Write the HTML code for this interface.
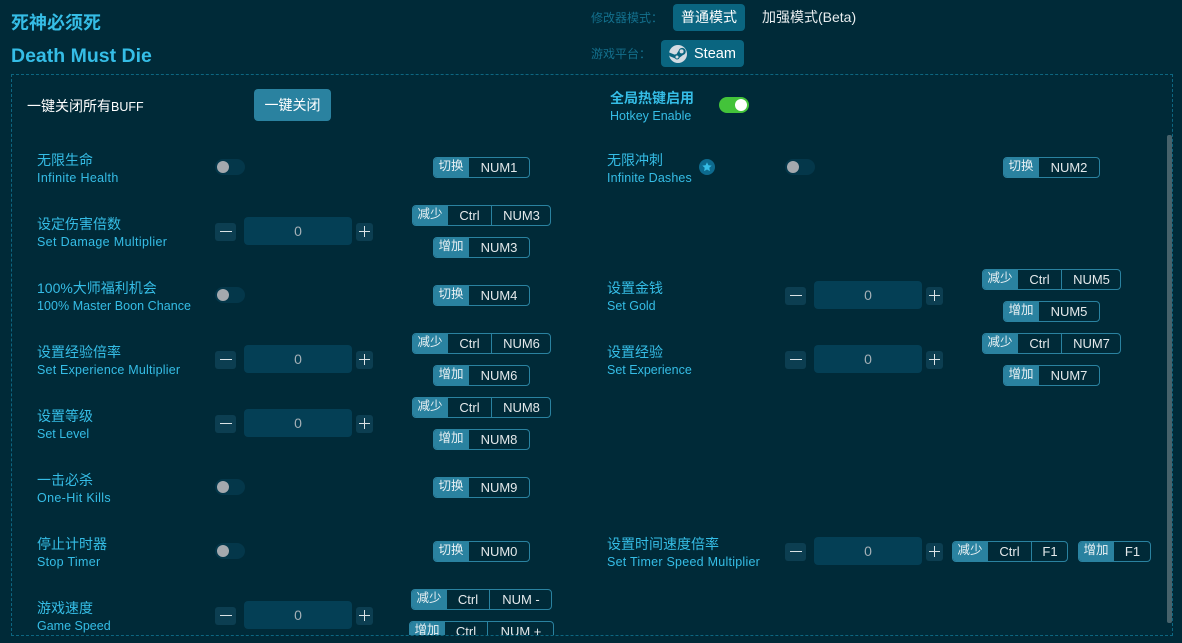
<!DOCTYPE html>
<html lang="zh"><head><meta charset="utf-8"><title>死神必须死</title>
<style>
*{box-sizing:border-box;margin:0;padding:0}
html,body{width:1182px;height:643px;overflow:hidden;background:#002a38}
body{position:relative;font-family:"Liberation Sans","Noto Sans CJK SC",sans-serif;color:#fff}
.a{position:absolute;white-space:nowrap}
#clip{position:absolute;left:0;top:75px;width:1182px;height:560px;overflow:hidden}
#clip>*{margin-top:-75px}
.cn{position:absolute;white-space:nowrap;font-size:14px;line-height:18px;color:#35bde6}
.en{position:absolute;white-space:nowrap;font-size:12.5px;line-height:16px;color:#35bde6}
.t{position:absolute;width:30px;height:16px;border-radius:8px;background:#04374a}
.t:after{content:"";position:absolute;left:2px;top:2px;width:12px;height:12px;border-radius:50%;background:#a4a9ae}
.s{position:absolute;width:21px;height:18px;border-radius:3px;background:#0c3e51}
.s.p{width:17px}
.s:before{content:"";position:absolute;left:5px;top:8px;width:12px;height:1px;background:#dbe3e6}
.s.p:before{left:3px;width:11px}
.s.p:after{content:"";position:absolute;left:8px;top:3px;width:1px;height:11px;background:#dbe3e6}
.v{position:absolute;width:108px;height:28px;border-radius:4px;background:#043f55;color:#a4b0b6;font-size:14px;line-height:28px;text-align:center}
.k{position:absolute;height:21px;display:flex;border:1px solid #2a82a0;border-radius:4px;overflow:hidden;font-size:13px;line-height:19px;color:#e4e9eb;background:#002a38}
.k b{font-weight:400;background:#2a82a0;text-align:center;flex:none;margin-left:-1px;font-size:12.5px;line-height:17px;color:#e8f0f3}
.k i{font-style:normal;text-align:center;flex:none;border-left:1px solid #2a82a0}
.k b+i{border-left:0}
</style></head><body>
<div class="a" style="left:11px;top:11px;font-size:18px;line-height:24px;font-weight:700;color:#35bde6">死神必须死</div>
<div class="a" style="left:11px;top:44px;font-size:19.5px;line-height:24px;font-weight:700;color:#35bde6">Death Must Die</div>
<div class="a" style="left:591px;top:10px;font-size:12px;line-height:16px;color:#13708d">修改器模式：</div>
<div class="a" style="left:673px;top:4px;width:72px;height:27px;border-radius:4px;background:#0a6580;font-size:14px;line-height:27px;text-align:center">普通模式</div>
<div class="a" style="left:762px;top:8px;font-size:14px;line-height:19px;color:#e8edef">加强模式(Beta)</div>
<div class="a" style="left:591px;top:46px;font-size:12px;line-height:16px;color:#13708d">游戏平台：</div>
<div class="a" style="left:661px;top:40px;width:83px;height:27px;border-radius:4px;background:#0a6580"></div>
<svg class="a" style="left:669px;top:45px" width="18" height="18" viewBox="0 0 18 18"><circle cx="9" cy="9" r="9" fill="#d3dbe2"/><path d="M0.3 11 L6 13.4 A2.6 2.6 0 0 0 10.6 12.6 L14 10 A3.6 3.6 0 1 0 9.6 5.8 L7.4 9.3 A2.7 2.7 0 0 0 5.6 9.6 L0 7.4 L0 9 Z" fill="#0a6580"/><circle cx="12.6" cy="6.4" r="2" fill="#d3dbe2"/><circle cx="8" cy="12" r="1.5" fill="#d3dbe2"/></svg>
<div class="a" style="left:694px;top:44px;font-size:14.5px;line-height:20px">Steam</div>

<div class="a" style="left:11px;top:74px;width:1162px;height:562px;border:1px dashed #0d6680"></div>

<div class="a" style="left:27px;top:97px;font-size:14px;line-height:18px">一键关闭所有<span style="font-size:12.5px">BUFF</span></div>
<div class="a" style="left:254px;top:89px;width:77px;height:32px;border-radius:4px;background:#2a82a0;font-size:14px;line-height:32px;text-align:center">一键关闭</div>
<div class="a" style="left:610px;top:89px;font-size:14px;line-height:18px;font-weight:700;color:#35bde6">全局热键启用</div>
<div class="en" style="left:610px;top:108px">Hotkey Enable</div>
<div class="a" style="left:719px;top:97px;width:30px;height:16px;border-radius:8px;background:#43c33a"></div>
<div class="a" style="left:735px;top:99px;width:12px;height:12px;border-radius:50%;background:#fff"></div>

<div id="clip"><div style="position:relative;width:1182px;height:643px">
<!-- row 1 -->
<div class="cn" style="left:37px;top:151px">无限生命</div><div class="en" style="left:37px;top:170px;letter-spacing:.35px">Infinite Health</div>
<div class="t" style="left:215px;top:159px"></div>
<div class="k" style="left:433px;top:157px;width:97px"><b style="width:36px">切换</b><i style="width:60px">NUM1</i></div>
<div class="cn" style="left:607px;top:151px">无限冲刺</div><div class="en" style="left:607px;top:170px;letter-spacing:.15px">Infinite Dashes</div>
<svg class="a" style="left:699px;top:159px" width="16" height="16" viewBox="0 0 16 16"><circle cx="8" cy="8" r="8" fill="#0d6a8e"/><path d="M8 3.2 L9.4 6.2 L12.7 6.6 L10.3 8.8 L10.9 12.1 L8 10.5 L5.1 12.1 L5.7 8.8 L3.3 6.6 L6.6 6.2 Z" fill="#35bde6"/></svg>
<div class="t" style="left:785px;top:159px"></div>
<div class="k" style="left:1003px;top:157px;width:97px"><b style="width:36px">切换</b><i style="width:60px">NUM2</i></div>
<!-- row 2 -->
<div class="cn" style="left:37px;top:215px">设定伤害倍数</div><div class="en" style="left:37px;top:234px;letter-spacing:.35px">Set Damage Multiplier</div>
<div class="s" style="left:215px;top:223px"></div><div class="v" style="left:244px;top:217px">0</div><div class="s p" style="left:356px;top:223px"></div>
<div class="k" style="left:412px;top:205px;width:139px"><b style="width:36px">减少</b><i style="width:43px">Ctrl</i><i style="width:60px">NUM3</i></div>
<div class="k" style="left:433px;top:237px;width:97px"><b style="width:36px">增加</b><i style="width:60px">NUM3</i></div>
<!-- row 3 -->
<div class="cn" style="left:37px;top:279px">100%大师福利机会</div><div class="en" style="left:37px;top:298px;letter-spacing:.05px">100% Master Boon Chance</div>
<div class="t" style="left:215px;top:287px"></div>
<div class="k" style="left:433px;top:285px;width:97px"><b style="width:36px">切换</b><i style="width:60px">NUM4</i></div>
<div class="cn" style="left:607px;top:279px">设置金钱</div><div class="en" style="left:607px;top:298px">Set Gold</div>
<div class="s" style="left:785px;top:287px"></div><div class="v" style="left:814px;top:281px">0</div><div class="s p" style="left:926px;top:287px"></div>
<div class="k" style="left:982px;top:269px;width:139px"><b style="width:36px">减少</b><i style="width:43px">Ctrl</i><i style="width:60px">NUM5</i></div>
<div class="k" style="left:1003px;top:301px;width:97px"><b style="width:36px">增加</b><i style="width:60px">NUM5</i></div>
<!-- row 4 -->
<div class="cn" style="left:37px;top:343px">设置经验倍率</div><div class="en" style="left:37px;top:362px;letter-spacing:.2px">Set Experience Multiplier</div>
<div class="s" style="left:215px;top:351px"></div><div class="v" style="left:244px;top:345px">0</div><div class="s p" style="left:356px;top:351px"></div>
<div class="k" style="left:412px;top:333px;width:139px"><b style="width:36px">减少</b><i style="width:43px">Ctrl</i><i style="width:60px">NUM6</i></div>
<div class="k" style="left:433px;top:365px;width:97px"><b style="width:36px">增加</b><i style="width:60px">NUM6</i></div>
<div class="cn" style="left:607px;top:343px">设置经验</div><div class="en" style="left:607px;top:362px">Set Experience</div>
<div class="s" style="left:785px;top:351px"></div><div class="v" style="left:814px;top:345px">0</div><div class="s p" style="left:926px;top:351px"></div>
<div class="k" style="left:982px;top:333px;width:139px"><b style="width:36px">减少</b><i style="width:43px">Ctrl</i><i style="width:60px">NUM7</i></div>
<div class="k" style="left:1003px;top:365px;width:97px"><b style="width:36px">增加</b><i style="width:60px">NUM7</i></div>
<!-- row 5 -->
<div class="cn" style="left:37px;top:407px">设置等级</div><div class="en" style="left:37px;top:426px">Set Level</div>
<div class="s" style="left:215px;top:415px"></div><div class="v" style="left:244px;top:409px">0</div><div class="s p" style="left:356px;top:415px"></div>
<div class="k" style="left:412px;top:397px;width:139px"><b style="width:36px">减少</b><i style="width:43px">Ctrl</i><i style="width:60px">NUM8</i></div>
<div class="k" style="left:433px;top:429px;width:97px"><b style="width:36px">增加</b><i style="width:60px">NUM8</i></div>
<!-- row 6 -->
<div class="cn" style="left:37px;top:471px">一击必杀</div><div class="en" style="left:37px;top:490px;letter-spacing:.35px">One-Hit Kills</div>
<div class="t" style="left:215px;top:479px"></div>
<div class="k" style="left:433px;top:477px;width:97px"><b style="width:36px">切换</b><i style="width:60px">NUM9</i></div>
<!-- row 7 -->
<div class="cn" style="left:37px;top:535px">停止计时器</div><div class="en" style="left:37px;top:554px;letter-spacing:.3px">Stop Timer</div>
<div class="t" style="left:215px;top:543px"></div>
<div class="k" style="left:433px;top:541px;width:97px"><b style="width:36px">切换</b><i style="width:60px">NUM0</i></div>
<div class="cn" style="left:607px;top:535px">设置时间速度倍率</div><div class="en" style="left:607px;top:554px;letter-spacing:.25px">Set Timer Speed Multiplier</div>
<div class="s" style="left:785px;top:543px"></div><div class="v" style="left:814px;top:537px">0</div><div class="s p" style="left:926px;top:543px"></div>
<div class="k" style="left:952px;top:541px;width:116px"><b style="width:36px">减少</b><i style="width:43px">Ctrl</i><i style="width:37px">F1</i></div>
<div class="k" style="left:1078px;top:541px;width:73px"><b style="width:36px">增加</b><i style="width:37px">F1</i></div>
<!-- row 8 -->
<div class="cn" style="left:37px;top:599px">游戏速度</div><div class="en" style="left:37px;top:618px">Game Speed</div>
<div class="s" style="left:215px;top:607px"></div><div class="v" style="left:244px;top:601px">0</div><div class="s p" style="left:356px;top:607px"></div>
<div class="k" style="left:411px;top:589px;width:141px"><b style="width:36px">减少</b><i style="width:42px">Ctrl</i><i style="width:63px">NUM -</i></div>
<div class="k" style="left:409px;top:621px;width:145px"><b style="width:36px">增加</b><i style="width:42px">Ctrl</i><i style="width:67px">NUM +</i></div>
</div></div>

<div class="a" style="left:1167px;top:135px;width:5px;height:488px;border-radius:2px;background:#47626b"></div>
</body></html>
